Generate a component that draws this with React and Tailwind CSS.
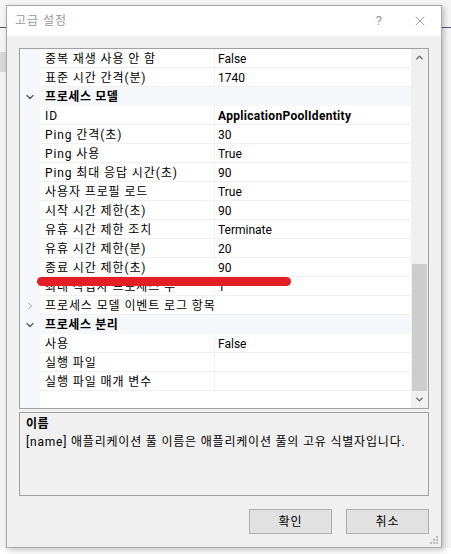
import { ChevronDown, ChevronRight, ChevronUp, X } from "lucide-react";

const font = { fontFamily: 'Roboto, "Noto Sans CJK KR", sans-serif' };

const rows = [
  { name: "중복 재생 사용 안 함", value: "False" },
  { name: "표준 시간 간격(분)", value: "1740" },
  { cat: "프로세스 모델" },
  { name: "ID", value: "ApplicationPoolIdentity", bold: true },
  { name: "Ping 간격(초)", value: "30" },
  { name: "Ping 사용", value: "True" },
  { name: "Ping 최대 응답 시간(초)", value: "90" },
  { name: "사용자 프로필 로드", value: "True" },
  { name: "시작 시간 제한(초)", value: "90" },
  { name: "유휴 시간 제한 조치", value: "Terminate" },
  { name: "유휴 시간 제한(분)", value: "20" },
  { name: "종료 시간 제한(초)", value: "90" },
  { name: "최대 작업자 프로세스 수", value: "1" },
  { name: "프로세스 모델 이벤트 로그 항목", value: "", collapsed: true },
  { cat: "프로세스 분리" },
  { name: "사용", value: "False" },
  { name: "실행 파일", value: "" },
  { name: "실행 파일 매개 변수", value: "" },
];

function Row({ row }) {
  if (row.cat) {
    return (
      <div className="flex h-[19px] items-center bg-[#f5f7fb]">
        <div className="w-[20px] flex justify-center">
          <ChevronDown size={12} strokeWidth={2.5} className="text-[#555]" />
        </div>
        <div className="pl-[5px] font-bold text-[12px] tracking-[0.6px] text-black">{row.cat}</div>
      </div>
    );
  }
  return (
    <div className="flex h-[19px]">
      <div className="w-[20px] shrink-0 bg-[#f5f7fb] flex items-center justify-center">
        {row.collapsed && <ChevronRight size={12} strokeWidth={2} className="text-[#999]" />}
      </div>
      <div className="flex flex-1 border-b border-[#f0f0f0]">
        <div className="w-[175px] shrink-0 pl-[5px] pt-[1px] border-r border-[#f0f0f0] text-[12px] tracking-[0.9px] leading-[18px] whitespace-nowrap overflow-hidden text-black">
          {row.name}
        </div>
        <div className={`flex-1 pl-[3px] pt-[1px] text-[12px] leading-[18px] text-black ${row.bold ? "font-bold tracking-[0.3px]" : ""}`}>
          {row.value}
        </div>
      </div>
    </div>
  );
}

export default function App() {
  return (
    <div className="w-[451px] h-[554px] relative overflow-hidden bg-[#f5f5f5]" style={font}>
      {/* background window bits */}
      <div className="absolute left-0 top-[27px] w-full h-px bg-[#55557a]" />
      <div className="absolute left-0 top-[52px] w-[6px] h-[20px] bg-[#d9d9d9]" />
      <div className="absolute left-0 top-[548px] w-full h-[6px] bg-white" />

      <div className="absolute left-[6px] top-[5px] w-[436px] h-[543px] border border-[#a9a9a9] bg-[#f0f0f0] flex flex-col shadow-[2px_2px_6px_rgba(0,0,0,0.25)]">
        <div className="h-[30px] bg-white flex items-center justify-between pl-[8px] pr-[13px]">
          <span className="text-[12px] tracking-[1px] text-[#999]">고급 설정</span>
          <div className="flex items-center gap-[30px]">
            <span className="text-[13px] text-[#999]">?</span>
            <X size={16} strokeWidth={1.2} className="text-[#888]" />
          </div>
        </div>

        <div className="flex-1 px-[12px] pt-[12px] flex flex-col">
          <div className="relative h-[361px] border border-[#a0a0a0] bg-white flex">
            <div className="flex-1 flex flex-col">
              {rows.map((r, i) => (
                <Row key={i} row={r} />
              ))}
              <div className="flex-1 flex">
                <div className="w-[20px] bg-[#f5f7fb]" />
              </div>
            </div>
            <div className="w-[17px] bg-[#f0f0f0] flex flex-col items-center">
              <div className="h-[17px] flex items-center justify-center">
                <ChevronUp size={11} strokeWidth={3} className="text-[#606060]" />
              </div>
              <div className="h-[198px]" />
              <div className="w-[15px] h-[127px] bg-[#cdcdcd]" />
              <div className="flex-1" />
              <div className="h-[17px] flex items-center justify-center">
                <ChevronDown size={11} strokeWidth={3} className="text-[#606060]" />
              </div>
            </div>
            {/* red annotation stroke */}
            <div className="absolute left-[17px] top-[228px] w-[254px] h-[9px] rounded-full bg-[#e41e25]" />
          </div>

          <div className="mt-[3px] h-[84px] border border-[#a0a0a0] bg-[#f0f0f0] px-[6px] pt-[3px]">
            <div className="text-[12px] font-bold tracking-[0.5px] text-black leading-[17px]">이름</div>
            <div className="text-[12px] tracking-[0.8px] text-black leading-[18px] whitespace-nowrap">
              [name] 애플리케이션 풀 이름은 애플리케이션 풀의 고유 식별자입니다.
            </div>
          </div>

          <div className="mt-[13px] flex justify-end gap-[14px]">
            <button className="w-[83px] h-[25px] border border-[#adadad] bg-[#e1e1e1] text-[12px] tracking-[1px] text-black">
              확인
            </button>
            <button className="w-[83px] h-[25px] border border-[#adadad] bg-[#e1e1e1] text-[12px] tracking-[1px] text-black">
              취소
            </button>
          </div>
        </div>

        <div className="absolute right-[3px] bottom-[3px] grid grid-cols-3 gap-[1px]">
          <span className="w-[2px] h-[2px]" />
          <span className="w-[2px] h-[2px]" />
          <span className="w-[2px] h-[2px] bg-[#bbb]" />
          <span className="w-[2px] h-[2px]" />
          <span className="w-[2px] h-[2px] bg-[#bbb]" />
          <span className="w-[2px] h-[2px] bg-[#bbb]" />
          <span className="w-[2px] h-[2px] bg-[#bbb]" />
          <span className="w-[2px] h-[2px] bg-[#bbb]" />
          <span className="w-[2px] h-[2px] bg-[#bbb]" />
        </div>
      </div>
    </div>
  );
}
